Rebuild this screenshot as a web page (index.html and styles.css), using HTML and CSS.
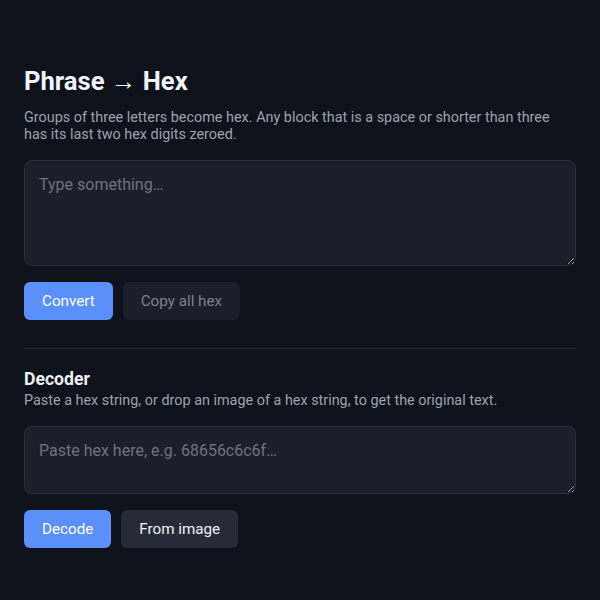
FILE: index.html
```html
<!DOCTYPE html>
<html lang="en">
<head>
    <meta charset="UTF-8">
    <meta name="viewport" content="width=device-width, initial-scale=1.0">
    <title>Phrase → Hex</title>
    <link rel="stylesheet" href="styles.css">
</head>
<body>
    <div class="wrap">
        <h1>Phrase → Hex</h1>
        <p class="desc">Groups of three letters become hex. Any block that is a space or shorter than three has its last two hex digits zeroed.</p>
        <textarea class="box big" placeholder="Type something…"></textarea>
        <div class="row">
            <button class="bt primary">Convert</button>
            <button class="bt off" disabled>Copy all hex</button>
        </div>

        <hr>

        <h3>Decoder</h3>
        <p class="desc small">Paste a hex string, or drop an image of a hex string, to get the original text.</p>
        <textarea class="box" placeholder="Paste hex here, e.g. 68656c6c6f…"></textarea>
        <div class="row">
            <button class="bt primary">Decode</button>
            <button class="bt second">From image</button>
        </div>
    </div>
</body>
</html>
```

FILE: styles.css
```css
*{
    box-sizing: border-box;
}
body{
    margin: 0;
    background: #0e121a;
    font-family: Roboto, "Liberation Sans", sans-serif;
    color: #eef0f4;
}
.wrap{
    padding: 66px 24px 0;
}
h1{
    font-size: 25.6px;
    line-height: 31px;
    margin: 0 0 12px;
    font-weight: 700;
    color: #f2f4f8;
}
.desc{
    font-size: 14.4px;
    line-height: 17.3px;
    color: #9ca2ae;
    margin: 0 0 16px;
}
.desc.small{
    margin: 0 0 17px;
}
.box{
    display: block;
    width: 100%;
    height: 68px;
    background: #1c1f2a;
    border: 1px solid #2a2f3c;
    border-radius: 8px;
    padding: 14px;
    font-family: Roboto, "Liberation Sans", sans-serif;
    font-size: 16px;
    line-height: 20px;
    color: #e6e8ee;
    resize: vertical;
}
.box.big{
    height: 106px;
}
.box::placeholder{
    color: #6c7280;
}
.row{
    display: flex;
    gap: 10px;
    margin-top: 16px;
}
.bt{
    height: 38px;
    padding: 0 18px;
    border: none;
    border-radius: 6px;
    font-family: Roboto, "Liberation Sans", sans-serif;
    font-size: 15.2px;
}
.primary{
    background: #5b8ff9;
    color: #ffffff;
}
.off{
    background: #1c1f2a;
    color: #7b818e;
}
.second{
    background: #262b38;
    color: #eef0f4;
}
hr{
    border: none;
    border-top: 1px solid #262a34;
    margin: 28px 0 20px;
}
h3{
    font-size: 17.6px;
    line-height: 21px;
    margin: 0 0 2px;
    font-weight: 700;
}
```
